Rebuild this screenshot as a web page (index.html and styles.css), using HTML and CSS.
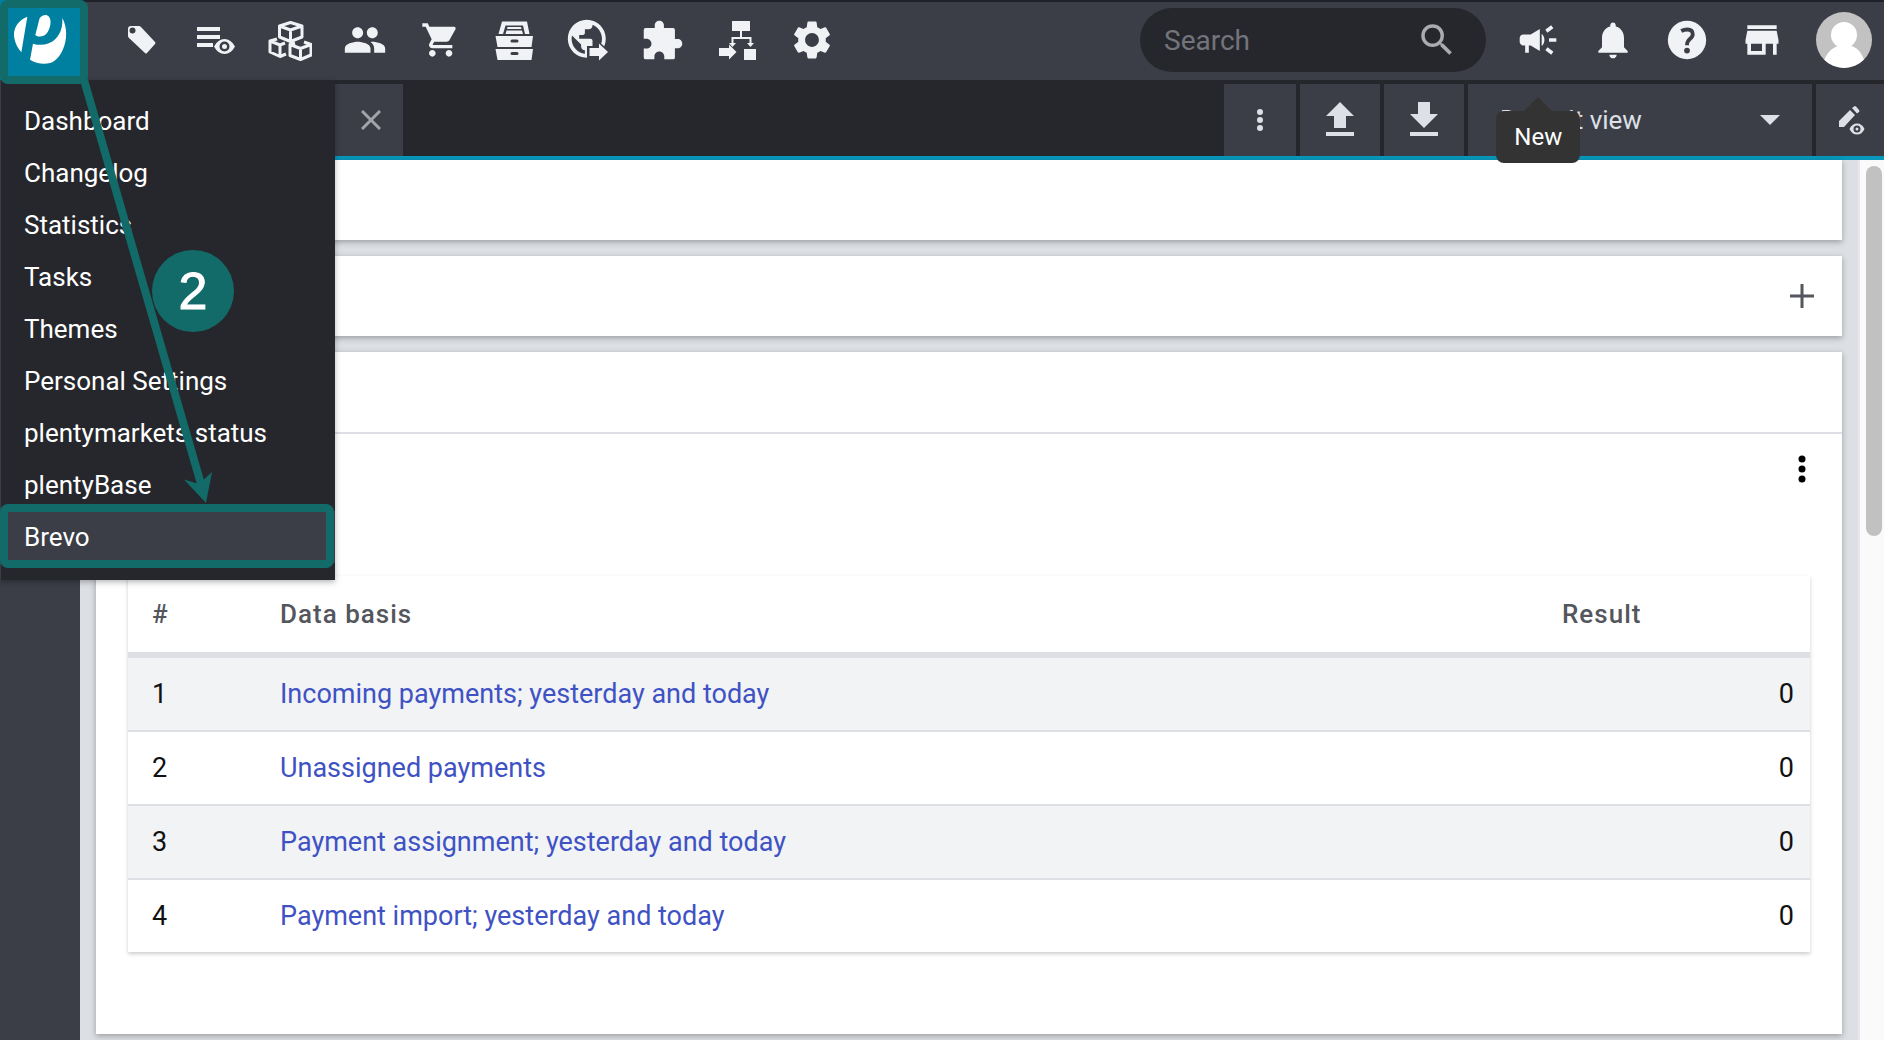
FILE: index.html
```html
<!DOCTYPE html>
<html lang="en">

<head>
    <meta charset="UTF-8">
    <meta name="viewport" content="width=device-width, initial-scale=1.0">
    <title>plentymarkets</title>
    <link rel="stylesheet" href="styles.css">
</head>

<body>
    <header class="topbar">
        <a class="logo" href="#" aria-label="Start">
            <svg viewBox="0 0 240 240">
                <path d="M82 50C50 62 38 90 43 115C46 132 54 146 64 157Z" />
                <path d="M119 54C128 44 140 42 147 50C155 60 152 80 143 96C135 110 116 114 106 105Z" />
                <path d="M187 54C202 82 202 118 189 148C178 173 164 186 150 189C128 194 107 189 90 179L99 131C125 139 150 133 167 116C184 99 188 77 187 54Z" />
            </svg>
        </a>

        <nav class="main-nav">
            <button aria-label="Items">
                <svg class="icon" viewBox="0 0 44 44"><path fill-rule="evenodd" d="M12 8h8q1 0 2 1l14 15q1 1 0 2l-8 9q-1 1-2 0L10 20q-1-1-1-2v-7q0-3 3-3zM13.500 9.500a3 3 0 1 0 0 6 3 3 0 0 0 0-6z" /></svg>
            </button>
            <button aria-label="Orders overview">
                <svg class="icon" viewBox="0 0 44 44"><path fill-rule="evenodd" d="M3 9h23v4H3zM3 17h23v4H3zM3 25h16v4H3zM20 28.500Q24 21 30.500 21T41 28.500Q37 36 30.500 36T20 28.500zM30.500 23.500a5 5 0 1 0 0 10 5 5 0 0 0 0-10zM30.500 26a2.500 2.500 0 1 1 0 5 2.500 2.500 0 0 1 0-5z" /></svg>
            </button>
            <button aria-label="Stock">
                <svg class="icon line" viewBox="0 0 44 44"><path d="M22.500 4.500L34 8v11l-11.500 4.500L11.500 19V8zM11.500 8l11 4L34 8M22.500 12v11M9 21l-7 2v11l10 4.500 6-2.500M2 23l10 4 5-2M12 27v11M27 25l-5 1.500v11l10.500 4L43 37V26.500L36 24M22 26.500l10.500 4L43 26.500M32.500 30.500V41" /></svg>
            </button>
            <button aria-label="CRM">
                <svg class="icon" viewBox="0 0 24 24"><path d="M16 11c1.660 0 2.990-1.340 2.990-3S17.660 5 16 5s-3 1.340-3 3 1.340 3 3 3zm-8 0c1.660 0 2.990-1.340 2.990-3S9.660 5 8 5 5 6.340 5 8s1.340 3 3 3zm0 2c-2.330 0-7 1.170-7 3.500V19h14v-2.500c0-2.330-4.670-3.500-7-3.500zm8 0c-.29 0-.62.02-.97.05 1.160.84 1.970 1.970 1.970 3.450V19h6v-2.500c0-2.330-4.670-3.500-7-3.500z" /></svg>
            </button>
            <button aria-label="Orders">
                <svg class="icon icon-small" viewBox="-1 0 24 24"><path d="M7 18c-1.100 0-1.990.9-1.990 2S5.900 22 7 22s2-.9 2-2-.9-2-2-2zM1 2v2h2l3.600 7.590-1.350 2.450c-.16.28-.25.61-.25.96 0 1.100.9 2 2 2h12v-2H7.420c-.14 0-.25-.11-.25-.25l.03-.12.9-1.630h7.450c.75 0 1.410-.41 1.750-1.030l3.580-6.490A1 1 0 0 0 20 4H5.210l-.94-2H1zm16 16c-1.100 0-1.990.9-1.990 2s.89 2 1.990 2 2-.9 2-2-.9-2-2-2z" /></svg>
            </button>
            <button aria-label="Data">
                <svg class="icon" viewBox="0 0 44 44"><path fill-rule="evenodd" d="M10 3.500h25l2.500 12.500h-31zM13.500 7.500L11 16h22L31 7.500zM15.500 9h13.500l.5 2H15zM14.500 12.500h15.500l1 3.500H13.500zM3.500 18h37.500l-1.500 11h-34zM20 21.500a1.500 1.500 0 0 0 0 3h5a1.500 1.500 0 0 0 0-3zM3.500 31h37.500l-1.500 11h-34zM20 34a1.500 1.500 0 0 0 0 3h5a1.500 1.500 0 0 0 0-3z" /></svg>
            </button>
            <button aria-label="Webshop">
                <svg class="icon" viewBox="0 0 44 44">
                    <path transform="translate(-2 -2) scale(1.900)" d="M12 2C6.480 2 2 6.480 2 12s4.480 10 10 10 10-4.480 10-10S17.520 2 12 2zm-1 17.930c-3.950-.49-7-3.850-7-7.930 0-.62.08-1.210.21-1.790L9 15v1c0 1.100.9 2 2 2v1.930zm6.900-2.540c-.26-.81-1-1.390-1.900-1.390h-1v-3c0-.55-.45-1-1-1H8v-2h2c.55 0 1-.45 1-1V7h2c1.100 0 2-.9 2-2v-.41c2.930 1.190 5 4.060 5 7.410 0 2.080-.8 3.970-2.100 5.390z" />
                    <path class="cutout" d="M21 28h10v-6l14 12-14 12v-6H21z" />
                    <path d="M23.500 30H33v-4.500l9 8.500-9 8.500V38h-9.500z" />
                </svg>
            </button>
            <button aria-label="Plugins">
                <svg class="icon" viewBox="0.500 -0.500 24 24"><path d="M20.500 11H19V6q0-1-1-1h-5V3.500C13 2.120 11.880 1 10.500 1S8 2.120 8 3.500V5H3Q2 5 2 6v4.800h1.500c1.490 0 2.700 1.210 2.700 2.700s-1.210 2.700-2.700 2.700H2V21q0 1 1 1h4.800v-1.500c0-1.490 1.210-2.700 2.700-2.700 1.490 0 2.700 1.210 2.700 2.700V22H18q1 0 1-1v-5h1.500c1.380 0 2.500-1.120 2.500-2.500S21.880 11 20.500 11z" /></svg>
            </button>
            <button aria-label="Processes">
                <svg class="icon" viewBox="0 0 44 44"><path d="M17 3h18v10h-8v6h9.500v6H39l-3.500 4-3.500-4h2.500v-4H18.500v4H21l-3.500 4-3.500-4h2.500v-6H25v-6h-8zM4 30h10v-3.500l7.500 7.500-7.500 7.500V38H4zM29 31h12v11H29z" /></svg>
            </button>
            <button aria-label="Setup">
                <svg class="icon icon-large" viewBox="0 0 24 24"><path d="M19.140 12.940c.04-.3.06-.61.06-.94 0-.32-.02-.64-.07-.94l2.030-1.580c.18-.14.23-.41.12-.61l-1.920-3.320c-.12-.22-.37-.29-.59-.22l-2.390.96c-.5-.38-1.030-.7-1.620-.94l-.36-2.540c-.04-.24-.24-.41-.48-.41h-3.840c-.24 0-.43.17-.47.41l-.36 2.540c-.59.24-1.130.57-1.620.94l-2.390-.96c-.22-.08-.47 0-.59.22L2.740 8.870c-.12.21-.08.47.12.61l2.030 1.580c-.05.3-.09.63-.09.94s.02.64.07.94l-2.030 1.580c-.18.14-.23.41-.12.61l1.920 3.320c.12.22.37.29.59.22l2.390-.96c.5.38 1.030.7 1.620.94l.36 2.540c.05.24.24.41.48.41h3.840c.24 0 .44-.17.47-.41l.36-2.540c.59-.24 1.130-.56 1.620-.94l2.390.96c.22.08.47 0 .59-.22l1.920-3.320c.12-.22.07-.47-.12-.61l-2.010-1.580zM12 15.600c-1.980 0-3.600-1.620-3.600-3.600s1.620-3.600 3.600-3.600 3.600 1.620 3.600 3.600-1.620 3.600-3.600 3.600z" /></svg>
            </button>
        </nav>

        <form class="search">
            <input type="search" placeholder="Search" aria-label="Search">
            <button type="submit" aria-label="Start search">
                <svg viewBox="0 0 24 24"><path d="M15.500 14h-.79l-.28-.27A6.470 6.470 0 0 0 16 9.500 6.500 6.500 0 1 0 9.500 16c1.610 0 3.090-.59 4.230-1.570l.27.28v.79l5 4.990L20.490 19l-4.990-5zm-6 0C7.010 14 5 11.990 5 9.500S7.010 5 9.500 5 14 7.010 14 9.500 11.990 14 9.500 14z" /></svg>
            </button>
        </form>

        <div class="user-nav">
            <button aria-label="New" aria-describedby="newTip">
                <svg class="icon" viewBox="0 0 24 24"><path d="M18 11v2h4v-2h-4zm-2 6.610c.96.71 2.210 1.650 3.200 2.390.4-.53.8-1.070 1.200-1.600-.99-.74-2.240-1.680-3.200-2.400-.4.54-.8 1.080-1.200 1.610zM20.400 5.600c-.4-.53-.8-1.070-1.200-1.600-.99.74-2.240 1.680-3.200 2.400.4.53.8 1.070 1.200 1.600.96-.72 2.210-1.650 3.200-2.400zM4 9c-1.100 0-2 .9-2 2v2c0 1.100.9 2 2 2h1v4h2v-4h1l5 3V6L8 9H4zm11.500 3c0-1.330-.58-2.530-1.500-3.350v6.690c.92-.81 1.500-2.010 1.500-3.340z" /></svg>
                <span class="tooltip" id="newTip" role="tooltip">New</span>
            </button>
            <button aria-label="Notifications">
                <svg class="icon" viewBox="0 0 24 24"><path d="M12 22c1.100 0 2-.9 2-2h-4c0 1.100.89 2 2 2zm6-6v-5c0-3.070-1.640-5.640-4.500-6.320V4c0-.83-.67-1.500-1.500-1.500s-1.500.67-1.500 1.500v.68C7.630 5.360 6 7.920 6 11v5l-2 2v1h16v-1l-2-2z" /></svg>
            </button>
            <button aria-label="Help">
                <svg class="icon icon-large" viewBox="0 0 24 24">
                    <circle cx="12" cy="12" r="10" />
                    <path class="cutout-line" d="M9 7.300Q10.500 6.500 12.200 6.500Q15 6.500 15 9Q15 10.300 13.500 11.500Q12 12.700 12 14.800" />
                    <circle class="cutout" cx="12" cy="17.500" r="1.500" />
                </svg>
            </button>
            <button aria-label="Marketplace">
                <svg class="icon" viewBox="0 0 24 24"><path d="M20 4H4v2h16V4zm1 10v-2l-1-5H4l-1 5v2h1v6h10v-6h4v6h2v-6h1zm-9 4H6v-4h6v4z" /></svg>
            </button>
        </div>
        <button class="avatar" aria-label="Account">
            <svg viewBox="0 0 56 56"><circle cx="28" cy="23" r="13" /><path d="M6 56Q10 34 28 33T50 56z" /></svg>
        </button>
    </header>

    <div class="workspace">
        <aside class="sidebar">
            <ul class="menu">
                <li><a href="#">Dashboard</a></li>
                <li><a href="#">Changelog</a></li>
                <li><a href="#">Statistics</a></li>
                <li><a href="#">Tasks</a></li>
                <li><a href="#">Themes</a></li>
                <li><a href="#">Personal Settings</a></li>
                <li><a href="#">plentymarkets status</a></li>
                <li><a href="#">plentyBase</a></li>
                <li><a class="active" href="#">Brevo</a></li>
            </ul>
        </aside>

        <div class="view">
            <div class="toolbar">
                <div class="tab">
                    <button aria-label="Close tab">
                        <svg viewBox="0 0 20 20"><path d="M1 1l18 18M19 1L1 19" /></svg>
                    </button>
                </div>
                <button class="tool tool-more" aria-label="More">
                    <svg viewBox="0 0 36 36"><circle cx="18" cy="10" r="3" /><circle cx="18" cy="18" r="3" /><circle cx="18" cy="26" r="3" /></svg>
                </button>
                <button class="tool" aria-label="Upload">
                    <svg viewBox="0 0 36 36"><path d="M18 0l14 14h-8v12H12V14H4zM4 30h28v4H4z" /></svg>
                </button>
                <button class="tool" aria-label="Download">
                    <svg viewBox="0 0 36 36"><path d="M12 0h12v12h8L18 26 4 12h8zM4 30h28v4H4z" /></svg>
                </button>
                <div class="view-select">
                    <select aria-label="View">
                        <option>Default view</option>
                    </select>
                    <svg viewBox="0 0 20 10"><path d="M0 0h20L10 10z" /></svg>
                </div>
                <button class="tool tool-edit" aria-label="Edit view">
                    <svg viewBox="0 0 36 36"><path fill-rule="evenodd" d="M7 25v-6L18 8l5 5-11 12zM20 6l2-1.500q1-1 2 0L27 8q1 1 0 2l-2 1.500zM17.500 27Q20 21.500 25 21.500T32.500 27Q30 32.500 25 32.500T17.500 27zM25 23.500a3.500 3.500 0 1 0 0 7 3.500 3.500 0 0 0 0-7zM25 25.500a1.500 1.500 0 1 1 0 3 1.500 1.500 0 0 1 0-3z" /></svg>
                </button>
            </div>

            <div class="page">
                <main class="content">
                    <section class="card card-head"></section>
                    <section class="card card-head">
                        <button class="card-btn" aria-label="Add">
                            <svg viewBox="0 0 28 28"><path class="plus" d="M14 2v24M2 14h24" /></svg>
                        </button>
                    </section>
                    <section class="card">
                        <div class="card-head card-title"></div>
                        <div class="card-tools">
                            <button class="card-btn" aria-label="Options">
                                <svg viewBox="0 0 28 28"><circle cx="14" cy="4" r="3.500" /><circle cx="14" cy="14" r="3.500" /><circle cx="14" cy="24" r="3.500" /></svg>
                            </button>
                        </div>
                        <div class="card-body">
                            <table>
                                <thead>
                                    <tr>
                                        <th class="col-nr">#</th>
                                        <th>Data basis</th>
                                        <th class="col-result">Result</th>
                                    </tr>
                                </thead>
                                <tbody>
                                    <tr>
                                        <td>1</td>
                                        <td><a href="#">Incoming payments; yesterday and today</a></td>
                                        <td>0</td>
                                    </tr>
                                    <tr>
                                        <td>2</td>
                                        <td><a href="#">Unassigned payments</a></td>
                                        <td>0</td>
                                    </tr>
                                    <tr>
                                        <td>3</td>
                                        <td><a href="#">Payment assignment; yesterday and today</a></td>
                                        <td>0</td>
                                    </tr>
                                    <tr>
                                        <td>4</td>
                                        <td><a href="#">Payment import; yesterday and today</a></td>
                                        <td>0</td>
                                    </tr>
                                </tbody>
                            </table>
                        </div>
                    </section>
                </main>
                <div class="scrollbar">
                    <div class="thumb"></div>
                </div>
            </div>
        </div>
    </div>

    <!-- Step marker: from the logo to the Brevo entry -->
    <div class="frame frame-logo"></div>
    <div class="frame frame-brevo"></div>
    <svg class="arrow" viewBox="0 0 340 580">
        <path class="arrow-line" d="M84 80L201 484" />
        <path d="M206 503L184 479.500 199 484 212 472z" />
    </svg>
    <div class="step">2</div>
</body>

</html>
```
FILE: styles.css
```css
* {
    box-sizing: border-box;
}

body {
    margin: 0;
    min-height: 100vh;
    display: flex;
    flex-direction: column;
    position: relative;
    background-color: #26272c;
    font-family: Roboto, "Liberation Sans", sans-serif;
    font-size: 26px;
    color: #111;
}

button {
    display: flex;
    align-items: center;
    justify-content: center;
    padding: 0;
    border: none;
    background: none;
    cursor: pointer;
}

a {
    text-decoration: none;
}

svg {
    display: block;
}

/* Top bar */
.topbar {
    display: flex;
    align-items: center;
    height: 80px;
    padding-right: 12px;
    background-color: #3b3e47;
    box-shadow: inset 0 2px 0 #1e202a;
}

.logo {
    width: 80px;
    height: 80px;
    background-color: #0080a0;
}

.logo svg {
    fill: #fff;
}

.main-nav {
    display: flex;
    flex: 0 1 745px;
    margin-left: 24px;
}

.main-nav button,
.user-nav button {
    flex: 1;
    height: 80px;
    position: relative;
}

.icon {
    width: 44px;
    height: 44px;
    fill: #f1f2f5;
}

.icon-small {
    width: 40px;
    height: 40px;
}

.icon-large {
    width: 46px;
    height: 46px;
}

.line {
    fill: none;
    stroke: #f1f2f5;
    stroke-width: 3;
    stroke-linejoin: round;
}

.cutout {
    fill: #3b3e47;
}

.cutout-line {
    fill: none;
    stroke: #3b3e47;
    stroke-width: 2;
}

.search {
    display: flex;
    align-items: center;
    width: 346px;
    height: 64px;
    margin-left: auto;
    padding: 0 28px 0 24px;
    border-radius: 32px;
    background-color: #26272c;
}

.search input {
    flex: 1;
    min-width: 0;
    padding: 0;
    border: none;
    outline: none;
    background: none;
    font-family: inherit;
    font-size: 28px;
    color: #fff;
}

.search input::placeholder {
    color: #73747c;
}

.search svg {
    width: 42px;
    height: 42px;
    fill: #a9abae;
}

.user-nav {
    display: flex;
    width: 298px;
    margin: 0 17px 0 15px;
}

.avatar {
    width: 56px;
    height: 56px;
    border-radius: 50%;
    background-color: #c2c2c2;
    overflow: hidden;
}

.avatar svg {
    width: 56px;
    height: 56px;
    fill: #fff;
}

.tooltip {
    position: absolute;
    top: 111px;
    left: 50%;
    transform: translateX(-50%);
    z-index: 5;
    width: 84px;
    border-radius: 8px;
    background-color: #333;
    color: #fff;
    font-family: Roboto, "Liberation Sans", sans-serif;
    font-size: 24px;
    line-height: 52px;
}

.tooltip::before {
    content: "";
    position: absolute;
    left: 28px;
    bottom: 100%;
    border: 14px solid transparent;
    border-top: none;
    border-bottom-color: #333;
}

/* Sidebar and open menu */
.workspace {
    display: flex;
    flex: 1;
}

.sidebar {
    flex: 0 0 80px;
    position: relative;
    background-color: #3b3e47;
}

.menu {
    position: absolute;
    top: 0;
    left: 0;
    z-index: 3;
    width: 335px;
    margin: 0;
    padding: 15px 0 17px;
    border-left: 1px solid #3b3e47;
    list-style: none;
    background-color: #26272c;
    box-shadow: 0 2px 6px rgba(0, 0, 0, 0.3);
}

.menu a {
    display: block;
    padding-left: 23px;
    line-height: 52px;
    color: #fff;
}

.menu .active {
    background-color: #3b3e47;
}

.view {
    display: flex;
    flex-direction: column;
    flex: 1;
    min-width: 0;
}

/* Tab and view tools */
.toolbar {
    display: flex;
    gap: 4px;
    height: 80px;
    padding-top: 4px;
    border-bottom: 4px solid #0898bc;
}

.tab {
    display: flex;
    justify-content: flex-end;
    width: 323px;
    margin-right: auto;
    padding-right: 22px;
    background-color: #3b3e47;
}

.tab svg {
    width: 20px;
    height: 20px;
    stroke: #a2a4aa;
    stroke-width: 3;
}

.tool {
    width: 80px;
    background-color: #3b3e47;
}

.tool-more {
    width: 72px;
}

.tool-edit {
    width: 68px;
}

.tool svg {
    width: 36px;
    height: 36px;
    fill: #dde0e7;
}

.view-select {
    display: flex;
    align-items: center;
    width: 344px;
    position: relative;
    background-color: #3b3e47;
}

.view-select select {
    width: 100%;
    height: 100%;
    padding: 0 32px;
    border: none;
    appearance: none;
    background: none;
    font-family: inherit;
    font-size: 26px;
    color: #dde0e7;
}

.view-select svg {
    position: absolute;
    right: 32px;
    width: 20px;
    height: 10px;
    fill: #dde0e7;
    pointer-events: none;
}

/* Cards */
.page {
    display: flex;
    flex: 1;
    background-color: #dcdfe4;
}

.content {
    display: flex;
    flex-direction: column;
    flex: 1;
    gap: 16px;
    padding: 0 16px 6px;
}

.card {
    background-color: #fff;
    box-shadow: 0 2px 6px rgba(0, 0, 0, 0.3);
}

.card-head {
    display: flex;
    align-items: center;
    justify-content: flex-end;
    height: 80px;
    padding: 0 26px;
}

.card-title {
    height: 82px;
    border-bottom: 2px solid #dddfe5;
}

.card-tools {
    display: flex;
    justify-content: flex-end;
    padding: 21px 26px 93px;
}

.card-btn svg {
    width: 28px;
    height: 28px;
}

.plus {
    stroke: #55575f;
    stroke-width: 3;
}

.card-body {
    padding: 0 32px 82px;
}

table {
    width: 100%;
    border-collapse: separate;
    border-spacing: 0;
    box-shadow: 0 2px 4px rgba(0, 0, 0, 0.2);
}

th,
td {
    height: 74px;
    padding: 0 16px;
    border-bottom: 2px solid #dddfe5;
    text-align: left;
}

th {
    height: 82px;
    border-bottom-width: 6px;
    font-weight: 500;
    letter-spacing: 1px;
    color: #54565d;
}

td {
    font-size: 27px;
}

th:first-child,
td:first-child {
    padding-left: 24px;
}

td:last-child {
    text-align: right;
}

tbody tr:nth-child(odd) {
    background-color: #f1f3f5;
}

tbody tr:last-child td {
    height: 72px;
    border-bottom: none;
}

.col-nr {
    width: 136px;
}

.col-result {
    width: 264px;
}

td a {
    color: #3f52c4;
}

.scrollbar {
    width: 26px;
    padding: 6px 2px 0 6px;
    border-left: 2px solid #e8e8ea;
    background-color: #fafafa;
}

.thumb {
    height: 370px;
    border-radius: 8px;
    background-color: #c1c1c1;
}

/* Step marker */
.frame {
    position: absolute;
    left: 0;
    z-index: 10;
    border: 8px solid #126b69;
    border-radius: 8px;
    pointer-events: none;
}

.frame-logo {
    top: 0;
    width: 88px;
    height: 84px;
}

.frame-brevo {
    top: 504px;
    width: 334px;
    height: 64px;
}

.arrow {
    position: absolute;
    top: 0;
    left: 0;
    z-index: 10;
    width: 340px;
    height: 580px;
    fill: #126b69;
    pointer-events: none;
}

.arrow-line {
    stroke: #126b69;
    stroke-width: 8;
}

.step {
    position: absolute;
    top: 250px;
    left: 152px;
    z-index: 11;
    width: 82px;
    border-radius: 50%;
    background-color: #126b69;
    color: #fff;
    font-family: "Liberation Sans", Arial, sans-serif;
    font-size: 52px;
    line-height: 82px;
    text-align: center;
    -webkit-text-stroke: 1px #fff;
}
```
